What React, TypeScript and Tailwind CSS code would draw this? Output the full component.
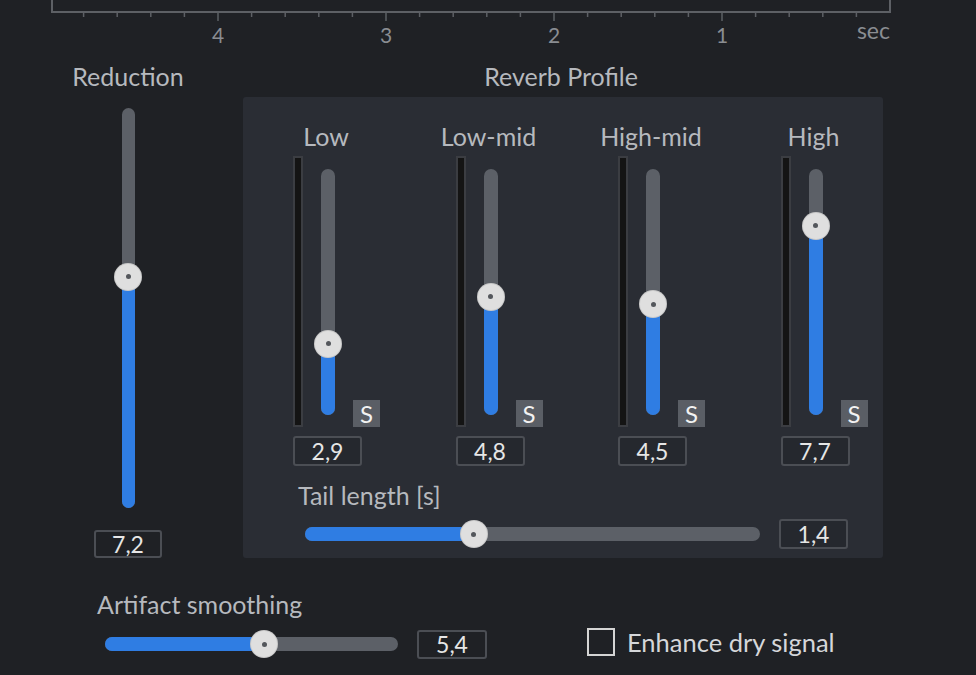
import React from "react";

const AXIS = "#5d6065";

function Axis() {
  const ticks = Array.from({ length: 24 }, (_, i) => 890 - 33.6 * (i + 1));
  const labels: [number, string][] = [
    [218, "4"],
    [386, "3"],
    [554, "2"],
    [722, "1"],
  ];
  return (
    <svg width="976" height="60" className="block">
      <path d="M52 0 V12 H890 V0" stroke={AXIS} strokeWidth="2" fill="none" />
      {ticks.map((x, i) => (
        <line
          key={i}
          x1={x}
          x2={x}
          y1={12}
          y2={(i + 1) % 5 === 0 ? 21 : 17}
          stroke={AXIS}
          strokeWidth="1.5"
        />
      ))}
      {labels.map(([x, t]) => (
        <text key={t} x={x} y={43} textAnchor="middle" fill="#8a8d92" fontSize="21" fontFamily="Lato, sans-serif">
          {t}
        </text>
      ))}
      <text x={890} y={39} textAnchor="end" fill="#8a8d92" fontSize="23" fontFamily="Lato, sans-serif">
        sec
      </text>
    </svg>
  );
}

function Knob() {
  return (
    <div className="w-[26px] h-[26px] rounded-full bg-[#dfdfdf] flex items-center justify-center shadow-[0_0_0_1px_#c9c9c9]">
      <div className="w-[5px] h-[5px] rounded-full bg-[#54575c]" />
    </div>
  );
}

// vertical fader: frac = filled part from the bottom
function VSlider({ h, track, frac }: { h: number; track: number; frac: number }) {
  const knobTop = h * (1 - frac) - 13;
  return (
    <div className="relative w-[26px] flex justify-center" style={{ height: h }}>
      <div className="relative h-full rounded-full bg-[#5c6067] overflow-hidden" style={{ width: track }}>
        <div className="absolute bottom-0 left-0 right-0 bg-[#2f7de3]" style={{ height: h * frac }} />
      </div>
      <div className="absolute left-0" style={{ top: knobTop }}>
        <Knob />
      </div>
    </div>
  );
}

function HSlider({ w, frac }: { w: number; frac: number }) {
  return (
    <div className="relative h-[26px] flex items-center" style={{ width: w }}>
      <div className="relative w-full h-[14px] rounded-full bg-[#5c6067] overflow-hidden">
        <div className="absolute top-0 bottom-0 left-0 bg-[#2f7de3]" style={{ width: w * frac }} />
      </div>
      <div className="absolute top-0" style={{ left: w * frac - 13 }}>
        <Knob />
      </div>
    </div>
  );
}

function ValueBox({ children, className }: { children: React.ReactNode; className: string }) {
  return (
    <div
      className={
        "flex items-center justify-center border-2 border-[#4b4e54] rounded-[3px] text-[#e6e6e6] text-[23px] leading-none " +
        className
      }
    >
      {children}
    </div>
  );
}

const bands = [
  { name: "Low", value: "2,9", frac: 0.29 },
  { name: "Low-mid", value: "4,8", frac: 0.48 },
  { name: "High-mid", value: "4,5", frac: 0.45 },
  { name: "High", value: "7,7", frac: 0.77 },
];

function Band({ name, value, frac }: { name: string; value: string; frac: number }) {
  return (
    <div className="flex flex-col w-[87px]">
      <div className="w-[66px] h-[32px] leading-[32px] text-[25px] whitespace-nowrap flex justify-center">
        {name}
      </div>
      <div className="mt-[4px] flex h-[271px]">
        <div className="w-[10px] h-full border-2 border-[#3b3d42] bg-[#141414]" />
        <div className="ml-[12px] mt-[13px]">
          <VSlider h={246} track={14} frac={frac} />
        </div>
        <div className="ml-[12px] self-end w-[27px] h-[27px] bg-[#5a5e65] text-[#f2f2f2] flex items-center justify-center text-[24px] leading-none">
          S
        </div>
      </div>
      <ValueBox className="mt-[9px] w-[69px] h-[30px] bg-[#25282e]">{value}</ValueBox>
    </div>
  );
}

export default function App() {
  return (
    <div className="w-[976px] h-[675px] bg-[#1f2125] overflow-hidden font-['Lato',sans-serif] text-[#b6b9be]">
      <Axis />

      <div className="flex pl-[60px]">
        {/* Reduction */}
        <div className="w-[136px] flex flex-col items-center">
          <div className="h-[32px] leading-[32px] text-[25px]">Reduction</div>
          <div className="mt-[16px]">
            <VSlider h={400} track={13} frac={0.578} />
          </div>
          <ValueBox className="mt-[22px] w-[68px] h-[28px]">7,2</ValueBox>
        </div>

        {/* Reverb profile */}
        <div className="ml-[47px] w-[640px] flex flex-col">
          <div className="h-[32px] leading-[32px] text-center text-[25px] pr-[4px]">Reverb Profile</div>
          <div className="mt-[5px] h-[461px] bg-[#2a2d34] rounded-[3px] pl-[50px] pt-[23px]">
            <div className="flex gap-[75.5px]">
              {bands.map((b) => (
                <Band key={b.name} {...b} />
              ))}
            </div>
            <div className="mt-[13px] ml-[5px] h-[32px] leading-[32px] text-[25px]">Tail length [s]</div>
            <div className="mt-[8px] ml-[12px] flex items-center h-[30px]">
              <HSlider w={455} frac={0.371} />
              <ValueBox className="ml-[19px] w-[69px] h-[30px] bg-[#25282e]">1,4</ValueBox>
            </div>
          </div>
        </div>
      </div>

      {/* Bottom controls */}
      <div className="mt-[30px] pl-[97px] h-[32px] leading-[32px] text-[25px]">Artifact smoothing</div>
      <div className="mt-[9px] ml-[105px] flex items-center h-[30px]">
        <HSlider w={293} frac={0.543} />
        <ValueBox className="ml-[19px] w-[70px] h-[29px]">5,4</ValueBox>
        <div className="ml-[100px] w-[28px] h-[28px] border-2 border-[#d4d4d4] -translate-y-[2px]" />
        <div className="ml-[12px] text-[25.5px] text-[#d5d7da] -translate-y-[2px]">Enhance dry signal</div>
      </div>
    </div>
  );
}
